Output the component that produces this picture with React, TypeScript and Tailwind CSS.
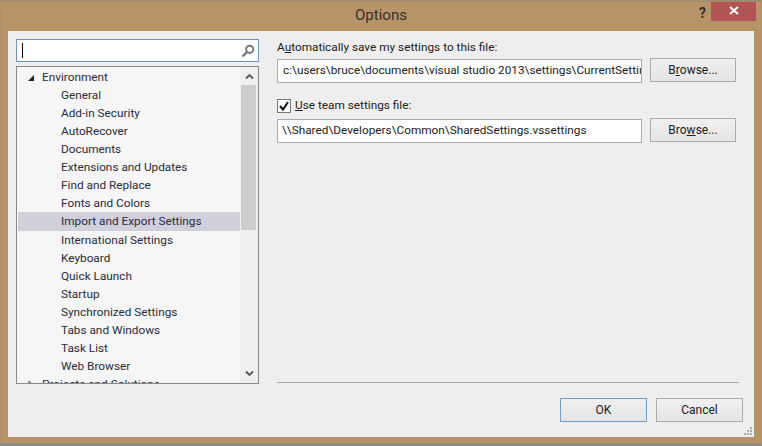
import React from "react";

const items = ["General","Add-in Security","AutoRecover","Documents","Extensions and Updates","Find and Replace","Fonts and Colors","Import and Export Settings","International Settings","Keyboard","Quick Launch","Startup","Synchronized Settings","Tabs and Windows","Task List","Web Browser"];

function Btn({ children, cls }: { children: React.ReactNode; cls: string }) {
  return (
    <div className={"flex items-center justify-center whitespace-pre bg-gradient-to-b from-[#f0f0f0] to-[#e4e4e4] text-[#222] text-[12px] " + cls}>
      {children}
    </div>
  );
}

function Tree() {
  return (
    <div className="h-[318px] mt-[4px] border border-[#8a8a8a] bg-[#f6f6f6] flex overflow-hidden">
      <div className="w-[223px] h-full overflow-hidden text-[#2b2b3a] text-[11.8px] pl-px">
        <div className="h-[18.5px] pt-[3px] flex items-center pl-[9px]">
          <svg width="8" height="8" viewBox="0 0 8 8"><path d="M7 1V7H1Z" fill="#222" /></svg>
          <span className="ml-[7px]">Environment</span>
        </div>
        {items.map((t, i) => (
          <div key={t} className={"h-[18.13px] leading-[19px] pl-[43px] " + (i === 7 ? "bg-[#d0cfdc]" : "")}>{t}</div>
        ))}
        <div className="h-[18px] flex items-center pl-[9px]">
          <svg width="8" height="8" viewBox="0 0 8 8"><path d="M2 0L6 4L2 8Z" fill="none" stroke="#555" /></svg>
          <span className="ml-[7px]">Projects and Solutions</span>
        </div>
      </div>
      <div className="w-[18px] h-full flex flex-col bg-[#f0f0f0]">
        <div className="h-[18px] flex items-center justify-center">
          <svg width="9" height="7" viewBox="0 0 9 7"><path d="M1 5.5L4.5 2L8 5.5" fill="none" stroke="#555" strokeWidth="1.8" /></svg>
        </div>
        <div className="h-[145px] w-[15px] ml-px bg-[#cdcdcd]" />
        <div className="flex-1" />
        <div className="h-[19px] flex items-center justify-center">
          <svg width="9" height="7" viewBox="0 0 9 7"><path d="M1 1.5L4.5 5L8 1.5" fill="none" stroke="#555" strokeWidth="1.8" /></svg>
        </div>
      </div>
    </div>
  );
}

export default function App() {
  return (
    <div className="relative w-[762px] h-[446px] overflow-hidden bg-[#b79468] flex flex-col border-t-2 border-t-[#a08a70] border-b-[3px] border-b-[#8d8a80] border-x border-x-[#a89070]" style={{ fontFamily: 'Roboto, sans-serif' }}>
      <div className="h-[29px] shrink-0 flex items-start relative">
        <div className="flex-1 text-center text-[15px] leading-[27px] text-[#3a3028]">Options</div>
        <div className="absolute right-[55px] top-[1px] text-[14px] font-bold text-[#333] leading-[20px]">?</div>
        <div className="absolute right-[5px] top-[-2px] w-[45px] h-[21px] bg-[#b25454] flex items-center justify-center">
          <svg width="10" height="9" viewBox="0 0 10 9"><path d="M1 1L9 8M9 1L1 8" stroke="#fff" strokeWidth="2" /></svg>
        </div>
      </div>
      <div className="flex-1 mx-[7px] mb-[6px] bg-[#eeeeee] flex relative">
        <div className="w-[243px] ml-[8px] mt-[8px] shrink-0">
          <div className="h-[23px] border border-[#6f93c0] bg-white flex items-center justify-between pl-[5px] pr-[3px]">
            <div className="w-px h-[15px] bg-black" />
            <svg width="14" height="14" viewBox="0 0 14 14"><circle cx="8.7" cy="5.3" r="3.6" fill="none" stroke="#777" strokeWidth="2" /><path d="M6 8L1.5 12.5" stroke="#777" strokeWidth="2.4" /></svg>
          </div>
          <Tree />
        </div>
        <div className="ml-[18px] w-[466px] flex flex-col text-[11.8px] text-[#222]">
          <div className="mt-[7px] h-[19px] leading-[19px]">A<span className="underline">u</span>tomatically save my settings to this file:</div>
          <div className="flex mt-[2px] items-start">
            <div className="w-[365px] h-[24px] border border-[#acacac] bg-white leading-[21px] pl-[5px] overflow-hidden whitespace-nowrap">c:\users\bruce\documents\visual studio 2013\settings\CurrentSettings.vssettings</div>
            <Btn cls="ml-[8px] w-[86px] h-[24px] border border-[#acacac] mt-[-1px]">B<span className="underline">r</span>owse...</Btn>
          </div>
          <div className="flex items-center mt-[15px] h-[16px]">
            <div className="w-[14px] h-[14px] border border-[#777] bg-white flex items-center justify-center">
              <svg width="12" height="12" viewBox="0 0 12 12"><path d="M2 6L5 9.5L10 2" fill="none" stroke="#111" strokeWidth="2" /></svg>
            </div>
            <span className="ml-[4px]"><span className="underline">U</span>se team settings file:</span>
          </div>
          <div className="flex mt-[5px] items-start">
            <div className="w-[365px] h-[24px] border border-[#acacac] bg-white leading-[21px] pl-[4px] overflow-hidden whitespace-nowrap">\\Shared\Developers\Common\SharedSettings.vssettings</div>
            <Btn cls="ml-[8px] w-[86px] h-[24px] border border-[#acacac] mt-[-1px]">Bro<span className="underline">w</span>se...</Btn>
          </div>
          <div className="flex-1" />
          <div className="h-px w-[462px] bg-[#a8a8a8]" />
          <div className="flex mt-[15px] mb-[15px] ml-[283px]">
            <Btn cls="w-[87px] h-[24px] border border-[#6f9bd8]">OK</Btn>
            <Btn cls="ml-[9px] w-[87px] h-[24px] border border-[#acacac]">Cancel</Btn>
          </div>
        </div>
        <svg className="absolute right-[1px] bottom-[1px]" width="9" height="9" viewBox="0 0 9 9" fill="#aaa"><rect x="6" y="0" width="2" height="2" /><rect x="3" y="3" width="2" height="2" /><rect x="6" y="3" width="2" height="2" /><rect x="0" y="6" width="2" height="2" /><rect x="3" y="6" width="2" height="2" /><rect x="6" y="6" width="2" height="2" /></svg>
      </div>
    </div>
  );
}
